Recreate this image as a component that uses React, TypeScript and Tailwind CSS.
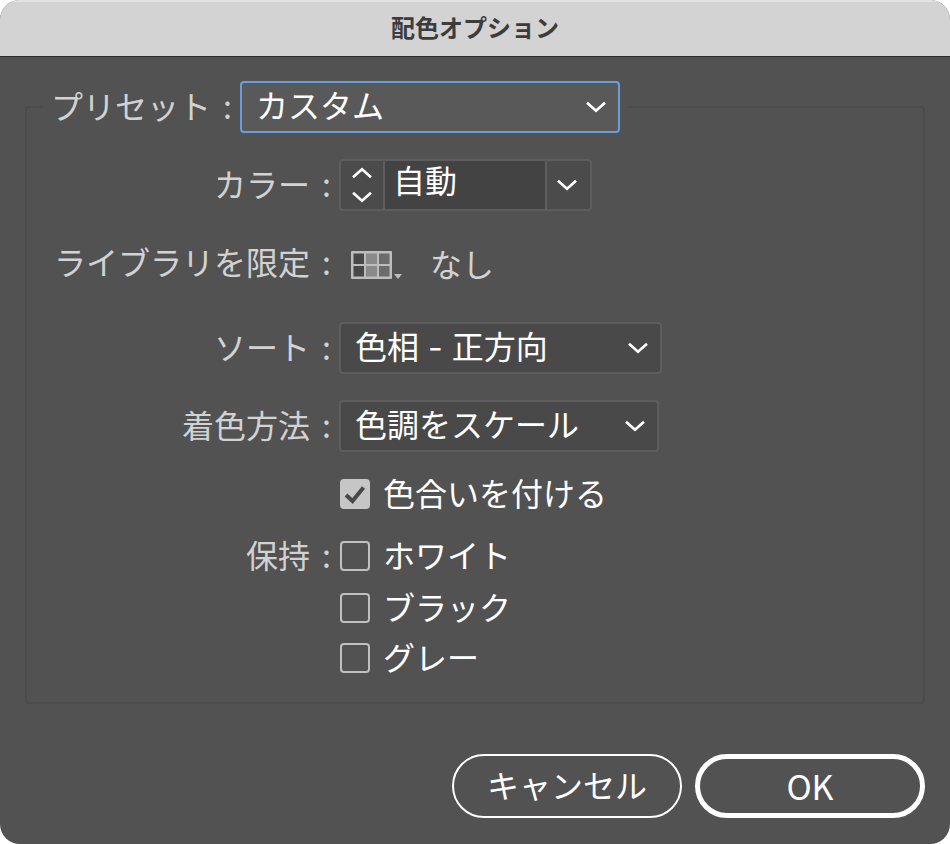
import { useId, useState } from "react";
import type { ReactNode } from "react";
import clsx from "clsx";

interface ChevronProps {
  up?: boolean;
  className?: string;
}

function Chevron({ up, className }: ChevronProps) {
  return (
    <svg
      viewBox="0 0 20 12"
      className={clsx("w-5 h-3 pointer-events-none", className)}
      fill="none"
      stroke="#fff"
      strokeWidth="2.6"
      aria-hidden="true"
    >
      <path d={up ? "M1 10.2 L10 2.2 L19 10.2" : "M1 1.8 L10 9.8 L19 1.8"} />
    </svg>
  );
}

function SwatchIcon() {
  return (
    <svg viewBox="0 0 51 28" className="w-[51px] h-7" aria-hidden="true">
      <rect x="0" y="0" width="41" height="28" rx="1" fill="#bdbdbd" />
      <rect x="2.5" y="2.5" width="10.5" height="10.5" fill="#484848" />
      <rect x="15" y="2.5" width="11" height="10.5" fill="#8a8a8a" />
      <rect x="28" y="2.5" width="10.5" height="10.5" fill="#6c6c6c" />
      <rect x="2.5" y="15" width="10.5" height="10.5" fill="#484848" />
      <rect x="15" y="15" width="11" height="10.5" fill="#8a8a8a" />
      <rect x="28" y="15" width="10.5" height="10.5" fill="#6c6c6c" />
      <path d="M43 23 h8 l-4 5 z" fill="#bdbdbd" />
    </svg>
  );
}

interface FieldLabelProps {
  htmlFor?: string;
  children: ReactNode;
}

function FieldLabel({ htmlFor, children }: FieldLabelProps) {
  return (
    <label htmlFor={htmlFor} className="flex gap-3 justify-end whitespace-nowrap pb-1 text-[#d2d2d2]">
      <span>{children}</span>
      <span>:</span>
    </label>
  );
}

interface SelectBoxProps {
  id: string;
  options: string[];
  active?: boolean;
  className?: string;
}

function SelectBox({ id, options, active, className }: SelectBoxProps) {
  return (
    <div className={clsx("relative", className)}>
      <select
        id={id}
        className={clsx(
          "w-full h-[52px] appearance-none rounded border-2 pl-[14px] pr-10 font-[Inter,'Noto_Sans_CJK_JP',sans-serif] leading-[48px] text-white outline-none",
          active ? "border-[#6a9cde] bg-[#595959]" : "border-[#5d5d5d] bg-[#494949]"
        )}
      >
        {options.map((option) => (
          <option key={option}>{option}</option>
        ))}
      </select>
      <Chevron className="absolute right-[14px] top-5" />
    </div>
  );
}

interface CheckOptionProps {
  label: string;
  defaultChecked?: boolean;
}

function CheckOption({ label, defaultChecked = false }: CheckOptionProps) {
  const id = useId();
  const [checked, setChecked] = useState(defaultChecked);

  return (
    <div className="flex items-center gap-[13px] h-8 pl-px">
      <div className="relative size-[30px]">
        <input
          id={id}
          type="checkbox"
          checked={checked}
          onChange={(e) => setChecked(e.target.checked)}
          className="block size-full appearance-none rounded border-2 border-[#c0c0c0] checked:bg-[#c6c6c6] checked:border-[#c6c6c6]"
        />
        {checked && (
          <svg
            viewBox="0 0 30 30"
            className="absolute inset-0 pointer-events-none"
            fill="none"
            stroke="#484848"
            strokeWidth="4"
            aria-hidden="true"
          >
            <path d="M6 16 L12.5 22 L23.5 8.5" />
          </svg>
        )}
      </div>
      <label htmlFor={id} className="pb-1 text-white">
        {label}
      </label>
    </div>
  );
}

interface RowProps {
  label?: string;
  htmlFor?: string;
  className?: string;
  children: ReactNode;
}

function Row({ label, htmlFor, className, children }: RowProps) {
  return (
    <div className={clsx("grid grid-cols-[280px_1fr] items-center gap-2", className)}>
      {label ? <FieldLabel htmlFor={htmlFor}>{label}</FieldLabel> : <span />}
      <div className="flex">{children}</div>
    </div>
  );
}

function ColorCountField() {
  const [value, setValue] = useState("自動");

  const step = (delta: number) => {
    const current = parseInt(value, 10) || 0;
    const next = current + delta;
    setValue(next > 0 ? String(next) : "自動");
  };

  return (
    <div className="flex h-[52px] w-[253px] rounded border-2 border-[#5d5d5d] bg-[#4b4b4b]">
      <div className="flex w-11 flex-col border-r-2 border-[#5d5d5d]">
        <button type="button" aria-label="増やす" className="flex flex-1 items-center justify-center" onClick={() => step(1)}>
          <Chevron up />
        </button>
        <button type="button" aria-label="減らす" className="flex flex-1 items-center justify-center" onClick={() => step(-1)}>
          <Chevron />
        </button>
      </div>
      <input
        id="colors"
        type="text"
        value={value}
        onChange={(e) => setValue(e.target.value)}
        className="min-w-0 flex-1 bg-[#434343] pl-2 pb-3 text-white outline-none"
      />
      <button type="button" aria-label="カラー数" className="flex w-[45px] items-center justify-center border-l-2 border-[#5d5d5d] pr-1">
        <Chevron />
      </button>
    </div>
  );
}

export default function App() {
  return (
    <div className="min-h-screen bg-white">
      <form
        className="flex min-h-screen flex-col overflow-hidden rounded-[20px] bg-[#525252] font-['Noto_Sans_CJK_JP',sans-serif] text-[32px] leading-8"
        onSubmit={(e) => e.preventDefault()}
      >
        <header className="flex h-[57px] items-center justify-center border-t-2 border-b border-t-[#e2e2e2] border-b-[#2c2c2c] bg-[#d3d3d3] pb-1">
          <h1 className="text-2xl leading-8 font-bold text-[#3c3c3c]">配色オプション</h1>
        </header>

        <main className="flex flex-1 flex-col px-[25px] pt-6 pb-[26px]">
          <fieldset className="rounded border-2 border-[#4b4b4b] px-4 pb-7">
            <legend className="px-2">
              <div className="flex items-center gap-2">
                <FieldLabel htmlFor="preset">プリセット</FieldLabel>
                <SelectBox id="preset" active options={["カスタム"]} className="w-[380px]" />
              </div>
            </legend>

            <div className="px-2">
              <Row label="カラー" htmlFor="colors" className="mt-[26px]">
                <ColorCountField />
              </Row>

              <Row label="ライブラリを限定" htmlFor="library" className="mt-[34px]">
                <div className="flex items-center gap-7 pl-3">
                  <button id="library" type="button" className="pt-1">
                    <SwatchIcon />
                  </button>
                  <span className="text-[#d2d2d2]">なし</span>
                </div>
              </Row>

              <Row label="ソート" htmlFor="sort" className="mt-[41px]">
                <SelectBox id="sort" options={["色相 - 正方向"]} className="w-[323px]" />
              </Row>

              <Row label="着色方法" htmlFor="method" className="mt-[26px]">
                <SelectBox id="method" options={["色調をスケール"]} className="w-[320px]" />
              </Row>

              <Row className="mt-[26px]">
                <CheckOption label="色合いを付ける" defaultChecked />
              </Row>

              <Row label="保持" className="mt-7">
                <CheckOption label="ホワイト" />
              </Row>
              <Row className="mt-[18px]">
                <CheckOption label="ブラック" />
              </Row>
              <Row className="mt-[18px]">
                <CheckOption label="グレー" />
              </Row>
            </div>
          </fieldset>

          <div className="mt-auto flex justify-end gap-[13px] pt-6">
            <button type="button" className="h-16 w-[230px] rounded-full border-2 border-white pb-1 text-white">
              キャンセル
            </button>
            <button type="submit" className="h-16 w-[230px] rounded-full border-[5px] border-white text-[34px] text-white">
              OK
            </button>
          </div>
        </main>
      </form>
    </div>
  );
}
